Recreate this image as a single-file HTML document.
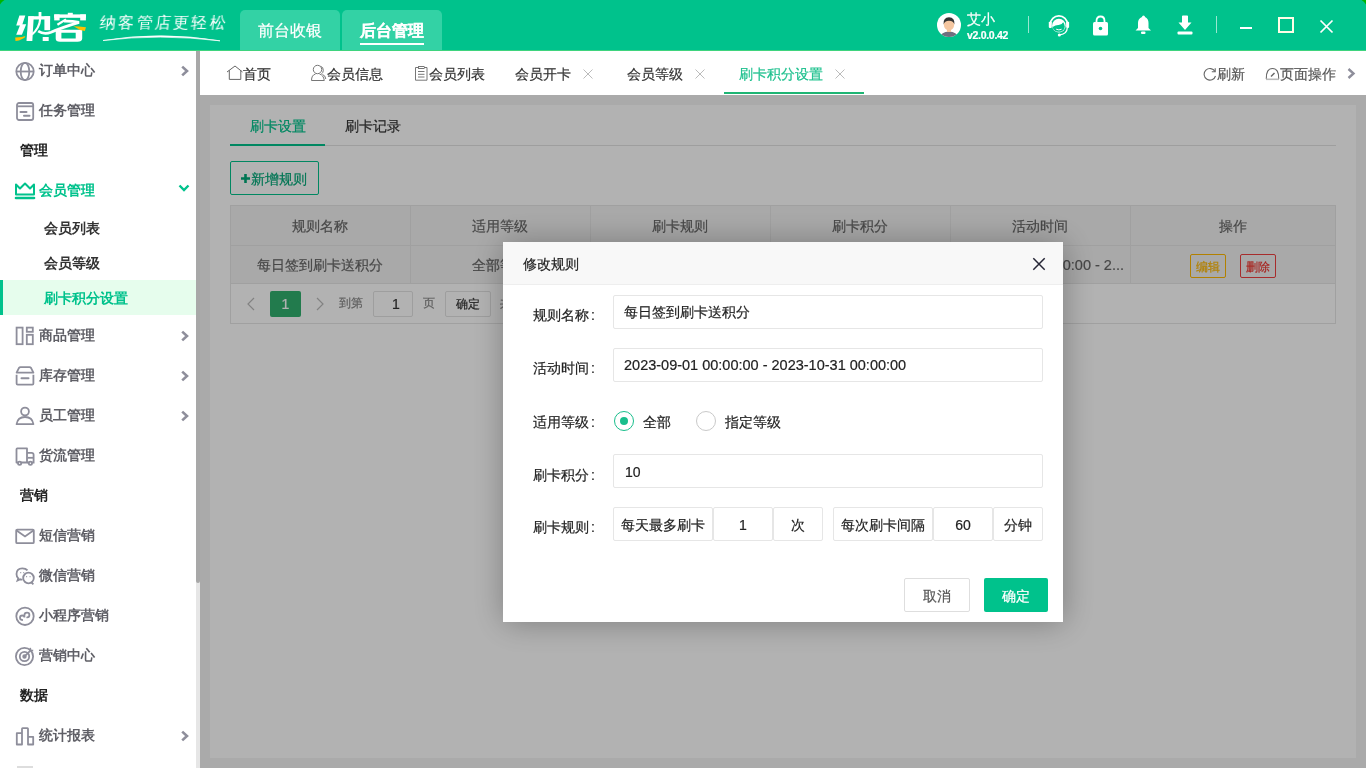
<!DOCTYPE html>
<html><head><meta charset="utf-8">
<style>
*{box-sizing:border-box;margin:0;padding:0}
html,body{width:1366px;height:768px;overflow:hidden;background:#fff;font-family:"Liberation Sans",sans-serif;font-size:14px;color:#333}
.a{position:absolute;white-space:nowrap;line-height:1;will-change:transform;-webkit-text-stroke-width:0.2px}
#hdr{position:absolute;left:0;top:0;width:1366px;height:51px;background:#00c28c}
#hdr .line{position:absolute;left:0;top:50px;width:1366px;height:1px;background:#3fd47e;z-index:2}
.htab{position:absolute;top:10px;height:40px;width:100px;background:#33d2a5;border-radius:5px 5px 0 0;color:#fff;font-size:16px}
#side{position:absolute;left:0;top:50px;width:196px;height:718px;background:#fff}
.st{font-size:14px;line-height:14px;color:#5f5f66;font-weight:bold;-webkit-text-stroke-width:0}
.sec{font-size:14px;line-height:14px;color:#222;font-weight:bold;-webkit-text-stroke-width:0}
.sub{left:44px;font-size:14px;line-height:14px;color:#333;font-weight:bold;-webkit-text-stroke-width:0}
#sb{position:absolute;left:196px;top:50px;width:4px;height:718px;background:#e6e6e6}
#sbth{position:absolute;left:196px;top:50px;width:4px;height:533px;background:#a8a8a8;border-radius:0 0 2px 2px}
#tabs{position:absolute;left:200px;top:50px;width:1166px;height:45px;background:#fff}
.tt{position:absolute;top:67px;font-size:14px;line-height:14px;color:#222}
#main{position:absolute;left:200px;top:95px;width:1166px;height:673px;background:#f4f4f4}
#panel{position:absolute;left:210px;top:105px;width:1146px;height:653px;background:#fff}
#mask{position:absolute;left:200px;top:95px;width:1166px;height:673px;background:rgba(0,0,0,.3)}
#modal{position:absolute;left:503px;top:242px;width:560px;height:380px;background:#fff;box-shadow:1px 1px 30px rgba(0,0,0,.3)}
</style></head><body>
<div id="hdr"><div class="line"></div>
  <svg style="position:absolute;left:0;top:0" width="6" height="6"><path d="M0 0 H4.5 Q1.5 1.5 0 4.5 Z" fill="#00b400"/></svg><svg style="position:absolute;left:1360px;top:0" width="6" height="6"><path d="M6 0 H1.5 Q4.5 1.5 6 4.5 Z" fill="#00b400"/></svg>
  <!-- logo -->
  <svg style="position:absolute;left:0;top:0" width="100" height="50" viewBox="0 0 100 50">
   <g fill="#fff">
    <polygon points="19.4,15.4 25.3,15.4 22,25.4 16.2,25.4"/>
    <polygon points="20.4,24.3 26.2,24.3 21.9,34.8 16.2,34.8"/>
    <polygon points="28.3,16.2 33.8,16.2 32.3,41 26.5,41"/>
    <rect x="28.3" y="16.2" width="21.8" height="3.3"/>
    <rect x="44.4" y="16.2" width="5.7" height="14"/>
    <rect x="38.6" y="12" width="2.8" height="7"/>
    <rect x="42.7" y="37" width="6" height="4"/>
    <path d="M40.2 19 Q39.5 28 32 34.5" stroke="#fff" stroke-width="2.2" fill="none"/>
    <rect x="67.8" y="12.8" width="5" height="2.6"/>
    <rect x="54.2" y="14.4" width="31.7" height="3.4"/>
    <rect x="54.2" y="14.4" width="5.4" height="6"/>
    <rect x="80.2" y="14.4" width="5.7" height="6"/>
    <path d="M57.4 24.8 L66 19.4" stroke="#fff" stroke-width="2.2"/>
    <path d="M64 21.2 Q72 21 79 22.4 Q62 27.5 51 32.3 Q44 35 38.2 31.2" stroke="#fff" stroke-width="2.7" fill="none"/>
    <path d="M55.7 29.8 H82.2 V38.5 Q82 41.8 77.5 41.8 H60 Q55.7 41.8 55.7 38.5 Z M61.4 32.8 V38.6 H75.7 V32.8 Z" fill-rule="evenodd"/>
   </g>
   <polygon points="15.2,37.4 21.9,37.1 25.4,36.1 24.6,37.8 19,40.4 15.5,41" fill="#ffc000"/>
   <polygon points="73.6,26.2 79,26.6 86,27.3 84.8,30.9 80,29.9" fill="#ffc000"/>
  </svg>
  <div class="a" style="left:100px;top:15px;font-size:16px;line-height:16px;color:#fff;letter-spacing:2.3px;transform:skewX(-6deg);-webkit-text-stroke-width:0">纳客管店更轻松</div>
  <svg style="position:absolute;left:100px;top:30px" width="130" height="14" viewBox="0 0 130 14"><path d="M3 10.5 Q 60 1 120 10.8 Q 60 3.6 3 10.5 Z" fill="#fff" stroke="#fff" stroke-width="0.7"/></svg>
  <div class="htab" style="left:240px"></div>
  <div class="htab" style="left:342px"></div>
  <div class="a" style="left:258px;top:23px;font-size:16px;color:#fff">前台收银</div>
  <div class="a" style="left:360px;top:23px;font-size:16px;color:#fff;font-weight:bold">后台管理</div>
  <div style="position:absolute;left:360px;top:43px;width:64px;height:2px;background:#fff"></div>
  <!-- user -->
  <svg style="position:absolute;left:937px;top:13px" width="24" height="24" viewBox="0 0 24 24">
    <defs><clipPath id="avc"><circle cx="12" cy="12" r="12"/></clipPath></defs>
    <circle cx="12" cy="12" r="12" fill="#fff"/>
    <g clip-path="url(#avc)">
      <path d="M3 24 Q4 19 12 18.5 Q20 19 21 24 Z" fill="#6f6f7f"/>
      <rect x="10" y="15" width="4" height="4" fill="#f1c29b"/>
      <ellipse cx="12" cy="11.5" rx="5.2" ry="6" fill="#f4c6a0"/>
      <path d="M6.5 11.5 Q6 4.5 12 4.3 Q18 4.5 17.5 11.5 Q16.5 8 12 7.8 Q7.5 8 6.5 11.5 Z" fill="#333"/>
    </g>
  </svg>
  <div class="a" style="left:967px;top:12px;font-size:14px;color:#fff">艾小</div>
  <div class="a" style="left:967px;top:30px;font-size:10.5px;color:#fff;font-weight:bold;letter-spacing:-0.3px">v2.0.0.42</div>
  <div style="position:absolute;left:1028px;top:16px;width:1px;height:17px;background:rgba(255,255,255,.6)"></div>
  <!-- headset -->
  <svg style="position:absolute;left:1048px;top:13px" width="22" height="24" viewBox="0 0 22 24">
    <path d="M2.3 11.5 A8.6 8.6 0 0 1 19.5 11.5" fill="none" stroke="#fff" stroke-width="1.7"/>
    <rect x="0.8" y="8.7" width="3" height="6.2" rx="0.8" fill="#fff"/>
    <rect x="18.1" y="8.7" width="3" height="6.2" rx="0.8" fill="#fff"/>
    <circle cx="10.9" cy="12.6" r="6.8" fill="#fff"/>
    <path d="M4.7 14 Q7.5 11.8 10.5 11.9 Q13.8 12 15.2 9.2 Q16.8 11.5 16.8 13.5 Q16.5 18.6 10.9 18.8 Q5.2 18.6 4.7 14 Z" fill="#00c28c"/>
    <path d="M8.2 16.2 Q10.9 17.6 13.6 16.2" fill="none" stroke="#fff" stroke-width="1"/>
    <path d="M19.3 14.8 Q19 21 12 21.8" fill="none" stroke="#fff" stroke-width="1.3"/>
    <circle cx="11.3" cy="21.9" r="1.5" fill="#fff"/>
  </svg>
  <!-- lock -->
  <svg style="position:absolute;left:1092px;top:15px" width="17" height="21" viewBox="0 0 17 21">
    <path d="M4.5 8 V6 Q4.5 1.5 8.5 1.5 Q12.5 1.5 12.5 6 V8" fill="none" stroke="#fff" stroke-width="1.8"/>
    <rect x="1" y="7" width="15" height="13.5" rx="1.5" fill="#fff"/>
    <circle cx="8.5" cy="13.5" r="1.8" fill="#00c28c"/>
  </svg>
  <!-- bell -->
  <svg style="position:absolute;left:1135px;top:15px" width="17" height="20" viewBox="0 0 17 20">
    <path d="M8.5 0.5 Q10 0.8 10 2 Q13.5 3.5 13.5 8 V13 L16 15.5 H0.5 L3 13 V8 Q3 3.5 7 2 Q7 0.8 8.5 0.5 Z" fill="#fff"/>
    <rect x="6" y="16.5" width="4.5" height="2.5" rx="1" fill="#fff"/>
  </svg>
  <!-- download -->
  <svg style="position:absolute;left:1177px;top:15px" width="16" height="20" viewBox="0 0 16 20">
    <path d="M5 1 Q5 0.5 6 0.5 H10 Q11 0.5 11 1 V7.5 H14.5 L8 15 L1.5 7.5 H5 Z" fill="#fff"/>
    <rect x="0.5" y="16.5" width="15" height="3" rx="1" fill="#fff"/>
  </svg>
  <div style="position:absolute;left:1216px;top:16px;width:1px;height:17px;background:rgba(255,255,255,.6)"></div>
  <div style="position:absolute;left:1240px;top:27px;width:12px;height:2px;background:#fff"></div>
  <div style="position:absolute;left:1278px;top:17px;width:16px;height:16px;border:2px solid #fffde6"></div>
  <svg style="position:absolute;left:1319px;top:19px" width="15" height="15" viewBox="0 0 15 15"><path d="M1.5 1.5 L13.5 13.5 M13.5 1.5 L1.5 13.5" stroke="#fff" stroke-width="1.7"/></svg>
</div>
<div id="side"></div>
<div id="sidec">
<svg style="position:absolute;left:14px;top:61px" width="22" height="22" viewBox="0 0 22 22" fill="none" stroke="#8e8e9b" stroke-width="1.8"><circle cx="11" cy="10.5" r="8.7"/><path d="M2.5 10.5 H19.5"/><ellipse cx="11" cy="10.5" rx="4.3" ry="8.7"/></svg>
<div class="a st" style="left:39px;top:63px">订单中心</div>
<svg style="position:absolute;left:179px;top:65px" width="12" height="12" viewBox="0 0 12 12"><path d="M3.2 1.6 L8 6 L3.2 10.4" fill="none" stroke="#8e8e9b" stroke-width="2.6"/></svg>
<svg style="position:absolute;left:14px;top:101px" width="22" height="22" viewBox="0 0 22 22" fill="none" stroke="#8e8e9b" stroke-width="1.8"><rect x="3" y="2" width="16.2" height="17" rx="2"/><path d="M3.2 5.3 H19"/><path d="M6.5 11 H12.5 M10 14.8 H15.5" stroke-width="2" stroke-linecap="round"/></svg>
<div class="a st" style="left:39px;top:103px">任务管理</div>
<div class="a sec" style="left:20px;top:143px">管理</div>
<svg style="position:absolute;left:14px;top:181px" width="22" height="22" viewBox="0 0 22 22" fill="none" stroke="#00c28c" stroke-width="2"><path d="M2 3.5 V13.5 H20 V3.5 L16 7.5 L11 2.5 L6 7.5 Z" stroke-linejoin="round"/><path d="M2 17 H20" stroke-width="2.6" stroke-linecap="round"/></svg>
<div class="a st" style="left:39px;top:183px;color:#00c28c">会员管理</div>
<svg style="position:absolute;left:177px;top:182px" width="14" height="12" viewBox="0 0 14 12"><path d="M2.5 3.5 L7 8 L11.5 3.5" fill="none" stroke="#00c28c" stroke-width="2.4"/></svg>
<div class="a sub" style="top:221px">会员列表</div>
<div class="a sub" style="top:256px">会员等级</div>
<div style="position:absolute;left:0;top:280px;width:196px;height:35px;background:#e6fded"></div><div style="position:absolute;left:0;top:280px;width:3px;height:35px;background:#00c28c"></div>
<div class="a sub" style="top:291px;color:#00c28c">刷卡积分设置</div>
<svg style="position:absolute;left:14px;top:325px" width="22" height="22" viewBox="0 0 22 22" fill="none" stroke="#8e8e9b" stroke-width="1.8"><rect x="2.6" y="2.6" width="6" height="16.6"/><rect x="12.8" y="2.6" width="6" height="4.2"/><rect x="12.8" y="9.8" width="6" height="9.4"/></svg>
<div class="a st" style="left:39px;top:328px">商品管理</div>
<svg style="position:absolute;left:179px;top:330px" width="12" height="12" viewBox="0 0 12 12"><path d="M3.2 1.6 L8 6 L3.2 10.4" fill="none" stroke="#8e8e9b" stroke-width="2.6"/></svg>
<svg style="position:absolute;left:14px;top:365px" width="22" height="22" viewBox="0 0 22 22" fill="none" stroke="#8e8e9b" stroke-width="1.8"><path d="M2.6 7.6 L5 2.8 Q5.5 2.2 6.5 2.2 H15.5 Q16.5 2.2 17 2.8 L19.4 7.6 Z" stroke-linejoin="round"/><path d="M2.6 9.8 V18.5 Q2.6 19.6 3.7 19.6 H18.3 Q19.4 19.6 19.4 18.5 V9.8"/><path d="M7.5 13.3 H14.5" stroke-width="2" stroke-linecap="round"/></svg>
<div class="a st" style="left:39px;top:368px">库存管理</div>
<svg style="position:absolute;left:179px;top:370px" width="12" height="12" viewBox="0 0 12 12"><path d="M3.2 1.6 L8 6 L3.2 10.4" fill="none" stroke="#8e8e9b" stroke-width="2.6"/></svg>
<svg style="position:absolute;left:14px;top:405px" width="22" height="22" viewBox="0 0 22 22" fill="none" stroke="#8e8e9b" stroke-width="1.8"><circle cx="11" cy="6.5" r="3.9"/><path d="M2.6 19.2 Q3.6 12 11 12 Q18.4 12 19.4 19.2 Z" stroke-linejoin="round"/></svg>
<div class="a st" style="left:39px;top:408px">员工管理</div>
<svg style="position:absolute;left:179px;top:410px" width="12" height="12" viewBox="0 0 12 12"><path d="M3.2 1.6 L8 6 L3.2 10.4" fill="none" stroke="#8e8e9b" stroke-width="2.6"/></svg>
<svg style="position:absolute;left:14px;top:445px" width="22" height="22" viewBox="0 0 22 22" fill="none" stroke="#8e8e9b" stroke-width="1.8"><path d="M2.5 17.5 V4.2 Q2.5 3.4 3.3 3.4 H13 V17.5 Z" stroke-linejoin="round"/><path d="M13 7.8 H17.6 Q19.6 7.8 19.6 9.8 V17.5 H13"/><path d="M13.5 12.8 H19.3"/><circle cx="5.6" cy="18.2" r="1.6" fill="#fff"/><circle cx="16.4" cy="18.2" r="1.6" fill="#fff"/></svg>
<div class="a st" style="left:39px;top:448px">货流管理</div>
<div class="a sec" style="left:20px;top:488px">营销</div>
<svg style="position:absolute;left:14px;top:525px" width="22" height="22" viewBox="0 0 22 22" fill="none" stroke="#8e8e9b" stroke-width="1.8"><rect x="2.2" y="4.6" width="17.6" height="13.6" rx="1"/><path d="M2.6 5.4 L11 11.4 L19.4 5.4"/></svg>
<div class="a st" style="left:39px;top:528px">短信营销</div>
<svg style="position:absolute;left:14px;top:565px" width="22" height="22" viewBox="0 0 22 22" fill="none" stroke="#8e8e9b" stroke-width="1.8"><path d="M13.5 5.4 Q11.8 3.4 8.3 3.4 Q2.5 3.4 2.5 9 Q2.5 11.7 4.3 13.3 L3.5 15.6 L6.4 14.3 Q7.3 14.6 8.5 14.7"/><circle cx="14.5" cy="13" r="5.3"/><path d="M17.5 17.5 L19.4 19.3"/><path d="M6.3 7.6 H7.2 M9.3 7.6 H10.2 M12.2 11.6 H13.1 M15.6 11.6 H16.5" stroke-width="1.4"/></svg>
<div class="a st" style="left:39px;top:568px">微信营销</div>
<svg style="position:absolute;left:14px;top:605px" width="22" height="22" viewBox="0 0 22 22" fill="none" stroke="#8e8e9b" stroke-width="1.8"><circle cx="11" cy="11.3" r="8.7"/><path d="M8.2 15 Q6 15 6 12.6 Q6 10.5 8.3 10.5 Q10.4 10.5 10.4 12.5 V10.2 Q10.4 7.7 13 7.7 Q15.4 7.7 15.4 10 Q15.4 12.3 13.2 12.4" stroke-linecap="round"/></svg>
<div class="a st" style="left:39px;top:608px">小程序营销</div>
<svg style="position:absolute;left:14px;top:645px" width="22" height="22" viewBox="0 0 22 22" fill="none" stroke="#8e8e9b" stroke-width="1.8"><circle cx="10.5" cy="11.5" r="8.6"/><circle cx="10.5" cy="11.5" r="4.7"/><circle cx="10.5" cy="11.5" r="1.3" fill="#8e8e9b"/><path d="M10.8 11.2 L17.2 4.8"/><path d="M16.2 2.8 L16.6 5.3 L19.2 5.6" stroke-width="1.6"/></svg>
<div class="a st" style="left:39px;top:648px">营销中心</div>
<div class="a sec" style="left:20px;top:688px">数据</div>
<svg style="position:absolute;left:14px;top:725px" width="22" height="22" viewBox="0 0 22 22" fill="none" stroke="#8e8e9b" stroke-width="1.8"><path d="M2.8 19.5 V8.2 H8 V19.5 Z M8 19.5 V3.8 Q8 3.2 8.6 3.2 H13.4 Q14 3.2 14 3.8 V19.5 M14 19.5 V11.8 H19.2 V19.5 Z" stroke-linejoin="round"/></svg>
<div class="a st" style="left:39px;top:728px">统计报表</div>
<svg style="position:absolute;left:179px;top:730px" width="12" height="12" viewBox="0 0 12 12"><path d="M3.2 1.6 L8 6 L3.2 10.4" fill="none" stroke="#8e8e9b" stroke-width="2.6"/></svg>
<div style="position:absolute;left:17px;top:766px;width:16px;height:2px;background:#ddd"></div>
</div>
<div id="sb"></div><div id="sbth"></div>
<div id="tabs"></div>
<svg style="position:absolute;left:226px;top:64px" width="17" height="17" viewBox="0 0 17 17" fill="none" stroke="#666" stroke-width="1"><path d="M1 8 L9 2 L16.5 8"/><path d="M3.3 6.3 V15.4 H14.8 V6.3"/></svg>
<div class="a tt" style="left:243px;color:#333">首页</div>
<svg style="position:absolute;left:310px;top:64px" width="17" height="18" viewBox="0 0 17 18" fill="none" stroke="#777" stroke-width="1"><circle cx="7.5" cy="5.5" r="4.2"/><path d="M10.5 2.2 Q13.5 3 13.3 6.5 Q13 9 11.5 9.8"/><path d="M1.5 16.5 Q1.5 11 5.5 10 M9.5 10 Q13.5 11 14.3 16.5 H1.5"/><path d="M12.5 10.5 Q15.5 11.5 15.8 15"/></svg>
<div class="a tt" style="left:327px;color:#333">会员信息</div>
<svg style="position:absolute;left:414px;top:65px" width="15" height="17" viewBox="0 0 15 17" fill="none" stroke="#777" stroke-width="1"><path d="M4.5 2.5 H1.5 V15.2 H13 V2.5 H10"/><rect x="4.5" y="1.5" width="5.5" height="2"/><path d="M4 6.5 H10.5 M4 9.3 H10.5 M4 12 H10.5"/></svg>
<div class="a tt" style="left:429px;color:#333">会员列表</div>
<div class="a tt" style="left:515px;color:#333">会员开卡</div>
<svg style="position:absolute;left:582px;top:68px" width="12" height="12" viewBox="0 0 12 12" stroke="#bbb" stroke-width="1"><path d="M1.5 1.5 L10.5 10.5 M10.5 1.5 L1.5 10.5"/></svg>
<div class="a tt" style="left:627px;color:#333">会员等级</div>
<svg style="position:absolute;left:694px;top:68px" width="12" height="12" viewBox="0 0 12 12" stroke="#bbb" stroke-width="1"><path d="M1.5 1.5 L10.5 10.5 M10.5 1.5 L1.5 10.5"/></svg>
<div class="a tt" style="left:739px;color:#1ec08e">刷卡积分设置</div>
<svg style="position:absolute;left:834px;top:68px" width="12" height="12" viewBox="0 0 12 12" stroke="#bbb" stroke-width="1"><path d="M1.5 1.5 L10.5 10.5 M10.5 1.5 L1.5 10.5"/></svg>
<div style="position:absolute;left:724px;top:92px;width:140px;height:2px;background:#1eb574"></div>
<svg style="position:absolute;left:1203px;top:67px" width="14" height="14" viewBox="0 0 14 14" fill="none" stroke="#666" stroke-width="1.1"><path d="M12 4.5 A5.8 5.8 0 1 0 12.5 9"/><path d="M12.2 1.2 V4.8 H8.8"/></svg>
<div class="a tt" style="left:1217px;color:#555">刷新</div>
<svg style="position:absolute;left:1265px;top:67px" width="15" height="14" viewBox="0 0 15 14" fill="none" stroke="#666" stroke-width="1.1"><path d="M1.3 12 Q1 1.5 7.5 1.5 Q14 1.5 13.7 12"/><path d="M1 12.3 H14" stroke="#bbb" stroke-width="1.6"/><path d="M6 9.5 L9.5 6" stroke-width="1.4"/></svg>
<div class="a tt" style="left:1280px;color:#555">页面操作</div>
<svg style="position:absolute;left:1346px;top:67px" width="12" height="13" viewBox="0 0 12 13"><path d="M2.5 2 L7.5 6.5 L2.5 11" fill="none" stroke="#8e8e9b" stroke-width="2.4"/></svg>
<div id="main"></div><div id="panel"></div>
<div class="a" style="left:250px;top:119px;font-size:14px;color:#00c28c">刷卡设置</div>
<div class="a" style="left:345px;top:119px;font-size:14px;color:#333">刷卡记录</div>
<div style="position:absolute;left:230px;top:145px;width:1106px;height:1px;background:#e2e2e2"></div>
<div style="position:absolute;left:230px;top:144px;width:95px;height:2px;background:#00c28c"></div>
<div style="position:absolute;left:230px;top:161px;width:89px;height:34px;border:1px solid #00c28c;border-radius:2px;background:#fff"></div>
<svg style="position:absolute;left:240px;top:173px" width="11" height="11" viewBox="0 0 11 11"><path d="M5.5 1 V10 M1 5.5 H10" stroke="#00a878" stroke-width="2.6"/></svg>
<div class="a" style="left:251px;top:172px;font-size:14px;color:#00a878">新增规则</div>
<div style="position:absolute;left:230px;top:205px;width:1106px;height:119px;border:1px solid #e6e6e6;background:#fff"></div>
<div style="position:absolute;left:231px;top:206px;width:1104px;height:39px;background:#f2f2f2"></div>
<div style="position:absolute;left:231px;top:245px;width:1104px;height:1px;background:#e6e6e6"></div>
<div style="position:absolute;left:231px;top:246px;width:1104px;height:37px;background:#f2f2f2"></div>
<div style="position:absolute;left:231px;top:283px;width:1104px;height:1px;background:#e6e6e6"></div>
<div style="position:absolute;left:410px;top:206px;width:1px;height:77px;background:#e6e6e6"></div>
<div style="position:absolute;left:590px;top:206px;width:1px;height:77px;background:#e6e6e6"></div>
<div style="position:absolute;left:770px;top:206px;width:1px;height:77px;background:#e6e6e6"></div>
<div style="position:absolute;left:950px;top:206px;width:1px;height:77px;background:#e6e6e6"></div>
<div style="position:absolute;left:1130px;top:206px;width:1px;height:77px;background:#e6e6e6"></div>
<div class="a" style="left:230px;width:180px;text-align:center;top:219px;font-size:14px;color:#666">规则名称</div>
<div class="a" style="left:410px;width:180px;text-align:center;top:219px;font-size:14px;color:#666">适用等级</div>
<div class="a" style="left:590px;width:180px;text-align:center;top:219px;font-size:14px;color:#666">刷卡规则</div>
<div class="a" style="left:770px;width:180px;text-align:center;top:219px;font-size:14px;color:#666">刷卡积分</div>
<div class="a" style="left:950px;width:180px;text-align:center;top:219px;font-size:14px;color:#666">活动时间</div>
<div class="a" style="left:1130px;width:206px;text-align:center;top:219px;font-size:14px;color:#666">操作</div>
<div class="a" style="left:230px;width:180px;text-align:center;top:258px;font-size:14px;color:#666">每日签到刷卡送积分</div>
<div class="a" style="left:410px;width:180px;text-align:center;top:258px;font-size:14px;color:#666">全部等级</div>
<div class="a" style="left:590px;width:180px;text-align:center;top:258px;font-size:14px;color:#666">每天最多1次</div>
<div class="a" style="left:770px;width:180px;text-align:center;top:258px;font-size:14px;color:#666">10</div>
<div class="a" style="left:900px;width:224px;text-align:right;top:258px;font-size:14.5px;color:#666">2023-09-01 00:00:00 - 2...</div>
<div style="position:absolute;left:1190px;top:254px;width:36px;height:24px;border:1px solid #ffb800;border-radius:2px"></div>
<div class="a" style="left:1196px;top:261px;font-size:12px;color:#ffb800">编辑</div>
<div style="position:absolute;left:1240px;top:254px;width:36px;height:24px;border:1px solid #f04040;border-radius:2px"></div>
<div class="a" style="left:1246px;top:261px;font-size:12px;color:#f0322a">删除</div>
<svg style="position:absolute;left:245px;top:297px" width="12" height="14" viewBox="0 0 12 14"><path d="M9 1 L3 7 L9 13" fill="none" stroke="#bbb" stroke-width="1.2"/></svg>
<div style="position:absolute;left:270px;top:291px;width:31px;height:26px;background:#32b06f;border-radius:2px"></div>
<div class="a" style="left:270px;width:31px;text-align:center;top:297px;font-size:14px;color:#fff">1</div>
<svg style="position:absolute;left:314px;top:297px" width="12" height="14" viewBox="0 0 12 14"><path d="M3 1 L9 7 L3 13" fill="none" stroke="#bbb" stroke-width="1.2"/></svg>
<div class="a" style="left:339px;top:297px;font-size:12px;color:#888">到第</div>
<div style="position:absolute;left:373px;top:291px;width:40px;height:26px;border:1px solid #e2e2e2;border-radius:2px;background:#fff"></div>
<div class="a" style="left:392px;top:297px;font-size:14px;color:#333">1</div>
<div class="a" style="left:423px;top:297px;font-size:12px;color:#888">页</div>
<div style="position:absolute;left:445px;top:291px;width:46px;height:26px;border:1px solid #e2e2e2;border-radius:2px;background:#fff"></div>
<div class="a" style="left:456px;top:298px;font-size:12px;color:#333">确定</div>
<div class="a" style="left:500px;top:297px;font-size:12px;color:#888">共 1 条</div>
<div id="mask"></div>
<div id="modal"></div>
<div style="position:absolute;left:503px;top:242px;width:560px;height:43px;background:#f8f8f8;border-bottom:1px solid #eee"></div>
<div class="a" style="left:523px;top:257px;font-size:14px;color:#222">修改规则</div>
<svg style="position:absolute;left:1032px;top:257px" width="14" height="14" viewBox="0 0 14 14"><path d="M1.3 1.3 L12.7 12.7 M12.7 1.3 L1.3 12.7" stroke="#262636" stroke-width="1.5"/></svg>
<div class="a" style="left:533px;top:308px;font-size:14px;color:#222">规则名称<span style="margin-left:2px">:</span></div>
<div style="position:absolute;left:613px;top:295px;width:430px;height:34px;border:1px solid #e6e6e6;border-radius:2px;background:#fff"></div>
<div class="a" style="left:624px;top:305px;font-size:14px;color:#222">每日签到刷卡送积分</div>
<div class="a" style="left:533px;top:361px;font-size:14px;color:#222">活动时间<span style="margin-left:2px">:</span></div>
<div style="position:absolute;left:613px;top:348px;width:430px;height:34px;border:1px solid #e6e6e6;border-radius:2px;background:#fff"></div>
<div class="a" style="left:624px;top:358px;font-size:14.5px;color:#222">2023-09-01 00:00:00 - 2023-10-31 00:00:00</div>
<div class="a" style="left:533px;top:415px;font-size:14px;color:#222">适用等级<span style="margin-left:2px">:</span></div>
<div style="position:absolute;left:614px;top:411px;width:20px;height:20px;border:1.8px solid #19be8c;border-radius:50%"></div>
<div style="position:absolute;left:620px;top:417px;width:8px;height:8px;background:#19be8c;border-radius:50%"></div>
<div class="a" style="left:643px;top:415px;font-size:14px;color:#222">全部</div>
<div style="position:absolute;left:696px;top:411px;width:20px;height:20px;border:1.8px solid #c9c9c9;border-radius:50%"></div>
<div class="a" style="left:725px;top:415px;font-size:14px;color:#222">指定等级</div>
<div class="a" style="left:533px;top:468px;font-size:14px;color:#222">刷卡积分<span style="margin-left:2px">:</span></div>
<div style="position:absolute;left:613px;top:454px;width:430px;height:34px;border:1px solid #e6e6e6;border-radius:2px;background:#fff"></div>
<div class="a" style="left:625px;top:465px;font-size:14px;color:#222">10</div>
<div class="a" style="left:533px;top:520px;font-size:14px;color:#222">刷卡规则<span style="margin-left:2px">:</span></div>
<div style="position:absolute;left:613px;top:507px;width:100px;height:34px;border:1px solid #e6e6e6;border-radius:2px;background:#fff"></div>
<div class="a" style="left:613px;width:100px;text-align:center;top:518px;font-size:14px;color:#222">每天最多刷卡</div>
<div style="position:absolute;left:713px;top:507px;width:60px;height:34px;border:1px solid #e6e6e6;border-radius:2px;background:#fff"></div>
<div class="a" style="left:713px;width:60px;text-align:center;top:518px;font-size:14px;color:#222">1</div>
<div style="position:absolute;left:773px;top:507px;width:50px;height:34px;border:1px solid #e6e6e6;border-radius:2px;background:#fff"></div>
<div class="a" style="left:773px;width:50px;text-align:center;top:518px;font-size:14px;color:#222">次</div>
<div style="position:absolute;left:833px;top:507px;width:100px;height:34px;border:1px solid #e6e6e6;border-radius:2px;background:#fff"></div>
<div class="a" style="left:833px;width:100px;text-align:center;top:518px;font-size:14px;color:#222">每次刷卡间隔</div>
<div style="position:absolute;left:933px;top:507px;width:60px;height:34px;border:1px solid #e6e6e6;border-radius:2px;background:#fff"></div>
<div class="a" style="left:933px;width:60px;text-align:center;top:518px;font-size:14px;color:#222">60</div>
<div style="position:absolute;left:993px;top:507px;width:50px;height:34px;border:1px solid #e6e6e6;border-radius:2px;background:#fff"></div>
<div class="a" style="left:993px;width:50px;text-align:center;top:518px;font-size:14px;color:#222">分钟</div>
<div style="position:absolute;left:904px;top:578px;width:66px;height:34px;border:1px solid #dedede;border-radius:2px;background:#fff"></div>
<div class="a" style="left:904px;width:66px;text-align:center;top:589px;font-size:14px;color:#555">取消</div>
<div style="position:absolute;left:984px;top:578px;width:64px;height:34px;border-radius:2px;background:#00c28c"></div>
<div class="a" style="left:984px;width:64px;text-align:center;top:589px;font-size:14px;color:#fff">确定</div>
</body></html>
